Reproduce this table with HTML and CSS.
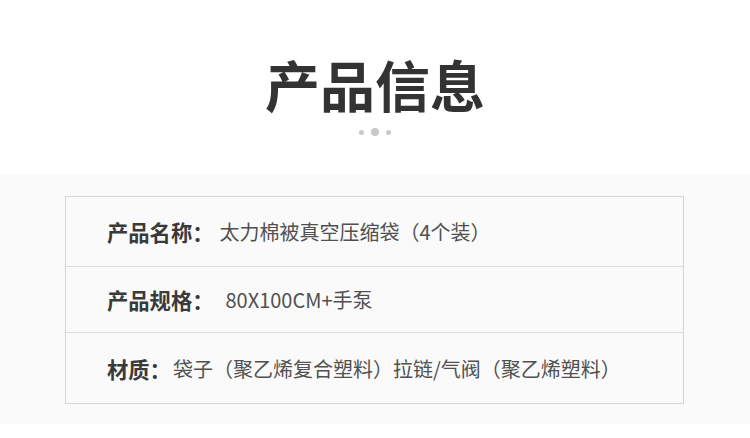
FILE: index.html
```html
<!DOCTYPE html>
<html lang="zh-CN">
<head>
<meta charset="utf-8">
<link rel="stylesheet" href="styles.css">
</head>
<body>
<header class="head">
  <h1 class="title">产品信息</h1>
  <div class="dots"><span class="dot"></span><span class="dot dot-big"></span><span class="dot"></span></div>
</header>
<section class="info">
  <div class="table">
    <div class="row row-1"><span class="label">产品名称：</span><span class="value v1">太力棉被真空压缩袋<span class="po">（</span>4个装<span class="pc">）</span></span></div>
    <div class="row row-2"><span class="label">产品规格：</span><span class="value v2">80X100CM+手泵</span></div>
    <div class="row row-3"><span class="label">材质：</span><span class="value v3">袋子<span class="po">（</span>聚乙烯复合塑料<span class="pc">）</span>拉链/气阀<span class="po">（</span>聚乙烯塑料<span class="pc">）</span></span></div>
  </div>
</section>
</body>
</html>
```

FILE: styles.css
```css
html, body {
  margin: 0;
  padding: 0;
  background: #ffffff;
  font-family: "Noto Sans CJK SC", "Noto Sans", sans-serif;
}
.head {
  height: 175px;
  display: flex;
  flex-direction: column;
  align-items: center;
}
.title {
  margin: 49px 0 0 0;
  font-size: 55px;
  line-height: 68px;
  font-weight: 700;
  color: #333333;
  letter-spacing: 0;
}
.dots {
  margin-top: 11px;
  display: flex;
  align-items: center;
  gap: 7px;
}
.dot {
  width: 5px;
  height: 5px;
  border-radius: 50%;
  background: #c8c8c8;
}
.dot-big {
  width: 8px;
  height: 8px;
}
.info {
  background: #fafafa;
  padding: 21px 66px 20px 65px;
}
.table {
  border: 1px solid #d6d6d6;
  width: 617px;
}
.row {
  display: flex;
  align-items: center;
  padding-left: 41px;
  border-top: 1px solid #dcdcdc;
  color: #444444;
}
.row-1 { border-top: none; height: 69px; }
.row-2 { height: 65px; }
.row-3 { height: 70px; }
.label {
  font-size: 21.3px;
  font-weight: 700;
  color: #3a3a3a;
}
.value {
  font-size: 20px;
  color: #505050;
}
.po, .pc {
  display: inline-block;
  width: 1em;
}
.po { text-align: right; }
.pc { text-align: left; }
.v1 { margin-left: 6px; }
.v2 { margin-left: 12px; }
.v3 { margin-left: 2px; }
```
